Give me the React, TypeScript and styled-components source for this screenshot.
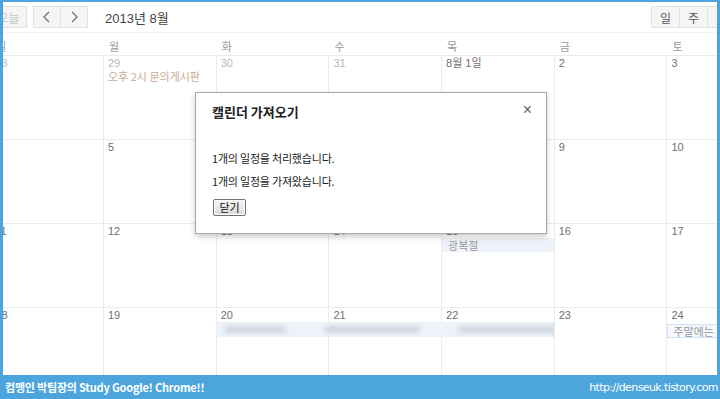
import styled, { createGlobalStyle } from "styled-components";

const GlobalStyle = createGlobalStyle`
  html, body {
    margin: 0;
    padding: 0;
    background: #ffffff;
  }
  body {
    font-family: "Liberation Sans", Arial, "Noto Sans CJK KR", sans-serif;
  }
`;

const Frame = styled.div`
  width: 720px;
  height: 399px;
  background: #4ca6dd;
  padding: 2px 3px 0 3px;
  box-sizing: border-box;
  display: flex;
  flex-direction: column;
  overflow: hidden;
`;

const Screen = styled.div`
  position: relative;
  flex: 1;
  background: #ffffff;
  overflow: hidden;
`;

const Toolbar = styled.div`
  height: 31px;
  display: flex;
  align-items: center;
  border-bottom: 1px solid #f3f3f3;
  box-sizing: border-box;
`;

const ButtonGroup = styled.div<{ $offset?: number; $overflow?: number }>`
  display: flex;
  margin-left: ${(p) => p.$offset ?? 0}px;
  margin-right: ${(p) => -(p.$overflow ?? 0)}px;
  height: 22px;
  flex-shrink: 0;
`;

const ToolButton = styled.div<{ $width: number; $muted?: boolean }>`
  width: ${(p) => p.$width}px;
  height: 22px;
  box-sizing: border-box;
  background: #f5f5f5;
  border: 1px solid #e2e2e2;
  margin-left: -1px;
  display: flex;
  align-items: center;
  justify-content: center;
  font-family: "Noto Sans CJK KR", sans-serif;
  font-size: 12px;
  color: ${(p) => (p.$muted ? "#c4c4c4" : "#555")};
  flex-shrink: 0;
`;

const MonthTitle = styled.div`
  margin-left: 17px;
  font-family: "Liberation Sans", "Noto Sans CJK KR", sans-serif;
  font-size: 13px;
  color: #444;
  flex: 1;
  padding-top: 1px;
`;

const Calendar = styled.div`
  margin-left: -12.7px;
  width: 789px;
`;

const HeadRow = styled.div`
  display: grid;
  grid-template-columns: repeat(7, 112.7px);
  height: 23px;
  border-bottom: 1px solid #ebebeb;
  box-sizing: border-box;
`;

const DayName = styled.div`
  padding: 5px 0 0 6px;
  font-family: "Noto Sans CJK KR", sans-serif;
  font-size: 11px;
  color: #999;
`;

const WeekRow = styled.div`
  display: grid;
  grid-template-columns: repeat(7, 112.7px);
  grid-template-rows: 1fr;
  height: 84px;
  border-bottom: 1px solid #ebebeb;
  box-sizing: border-box;
`;

const Cell = styled.div<{ $col: number }>`
  grid-column: ${(p) => p.$col};
  grid-row: 1;
  border-left: 1px solid #ebebeb;
  padding: 1px 0 0 4px;
  box-sizing: border-box;
  min-width: 0;
  overflow: hidden;
`;

const DateNum = styled.div<{ $faded?: boolean }>`
  font-family: "Liberation Sans", "Noto Sans CJK KR", sans-serif;
  font-size: 11px;
  line-height: 13px;
  color: ${(p) => (p.$faded ? "#b8b8b8" : "#707070")};
`;

const EventText = styled.div`
  margin-top: 0;
  font-family: "Noto Sans CJK KR", sans-serif;
  font-size: 11px;
  line-height: 13px;
  color: #c9a992;
  white-space: nowrap;
`;

const EventBar = styled.div<{ $boxed?: boolean }>`
  margin: ${(p) => (p.$boxed ? 2 : 0)}px 0 0 -4px;
  height: 14px;
  background: ${(p) => (p.$boxed ? "#f5f9fd" : "#edf3f9")};
  border: 1px solid ${(p) => (p.$boxed ? "#cfe1f2" : "transparent")};
  box-sizing: border-box;
  padding-left: 5px;
  font-family: "Noto Sans CJK KR", sans-serif;
  font-size: 11px;
  line-height: 12px;
  color: #9a9a9a;
  white-space: nowrap;
  overflow: hidden;
`;

const SpanBar = styled.div`
  grid-column: 3 / 6;
  grid-row: 1;
  align-self: start;
  margin-top: 14px;
  height: 15px;
  background: #edf3f9;
  border-right: 1px solid #cfe1f2;
  display: flex;
  align-items: center;
  gap: 38px;
  padding-left: 8px;
  box-sizing: border-box;
  overflow: hidden;
`;

const Blurred = styled.span<{ $w: number }>`
  display: inline-block;
  width: ${(p) => p.$w}px;
  height: 7px;
  background: #cfd6de;
  border-radius: 4px;
  filter: blur(2.5px);
  flex-shrink: 0;
`;

const Dialog = styled.div`
  position: absolute;
  left: 192px;
  top: 90px;
  width: 352px;
  height: 142px;
  background: #ffffff;
  border: 1px solid #a8a8a8;
  box-shadow: 0 3px 6px rgba(0, 0, 0, 0.2);
  box-sizing: border-box;
  padding: 7px 16px 0 16px;
  display: flex;
  flex-direction: column;
  font-family: "Noto Sans CJK KR", sans-serif;
`;

const DialogHead = styled.div`
  display: flex;
  justify-content: space-between;
  align-items: center;
  height: 22px;
`;

const DialogTitle = styled.div`
  font-size: 13px;
  font-weight: 700;
  color: #222;
`;

const CloseMark = styled.div`
  font-family: "Liberation Sans", sans-serif;
  font-size: 16px;
  color: #666;
  margin-right: -2px;
  margin-top: -3px;
`;

const Message = styled.div<{ $gap: number }>`
  margin-top: ${(p) => p.$gap}px;
  font-size: 11px;
  line-height: 14px;
  color: #222;
  letter-spacing: -0.2px;
`;

const CloseButton = styled.button`
  align-self: flex-start;
  margin-top: 11px;
  margin-left: 1px;
  width: 33px;
  height: 17px;
  padding: 0;
  font-family: "Noto Sans CJK KR", sans-serif;
  font-size: 11px;
  line-height: 13px;
  color: #111;
  background: linear-gradient(#f4f4f4, #dcdcdc);
  border: 1px solid #707070;
  border-radius: 2px;
  box-shadow: inset 0 0 0 1px #fff;
`;

const Footer = styled.div`
  height: 24px;
  flex-shrink: 0;
  display: flex;
  align-items: center;
  justify-content: space-between;
  padding: 0 0 0 2px;
  color: #ffffff;
`;

const FooterLeft = styled.div`
  font-family: "Noto Sans CJK KR", sans-serif;
  font-size: 11px;
  font-weight: 700;
  letter-spacing: -0.2px;
`;

const FooterRight = styled.div`
  font-family: "DejaVu Sans", sans-serif;
  font-size: 11px;
  letter-spacing: -0.6px;
  margin-right: -1px;
`;

const Chevron = ({ dir }: { dir: "left" | "right" }) => (
  <svg width="10" height="12" viewBox="0 0 10 12">
    <path
      d={dir === "left" ? "M7 1 L2 6 L7 11" : "M3 1 L8 6 L3 11"}
      fill="none"
      stroke="#777"
      strokeWidth="1.4"
    />
  </svg>
);

const dayNames = ["일", "월", "화", "수", "목", "금", "토"];

const weeks = [
  ["28", "29", "30", "31", "8월 1일", "2", "3"],
  ["4", "5", "6", "7", "8", "9", "10"],
  ["11", "12", "13", "14", "15", "16", "17"],
  ["18", "19", "20", "21", "22", "23", "24"],
];

export default function App() {
  return (
    <>
      <GlobalStyle />
      <Frame>
        <Screen>
          <Toolbar>
            <ButtonGroup $offset={-12}>
              <ToolButton $width={37} $muted>
                오늘
              </ToolButton>
            </ButtonGroup>
            <ButtonGroup $offset={7}>
              <ToolButton $width={28}>
                <Chevron dir="left" />
              </ToolButton>
              <ToolButton $width={28}>
                <Chevron dir="right" />
              </ToolButton>
            </ButtonGroup>
            <MonthTitle>2013년 8월</MonthTitle>
            <ButtonGroup $overflow={30}>
              <ToolButton $width={29}>일</ToolButton>
              <ToolButton $width={29}>주</ToolButton>
              <ToolButton $width={40} />
            </ButtonGroup>
          </Toolbar>
          <Calendar>
            <HeadRow>
              {dayNames.map((d) => (
                <DayName key={d}>{d}</DayName>
              ))}
            </HeadRow>
            {weeks.map((week, wi) => (
              <WeekRow key={wi}>
                {week.map((day, di) => (
                  <Cell key={day} $col={di + 1}>
                    <DateNum $faded={wi === 0 && di < 4}>{day}</DateNum>
                    {wi === 0 && di === 1 ? (
                      <EventText>오후 2시 문의게시판</EventText>
                    ) : null}
                    {wi === 2 && di === 4 ? <EventBar>광복절</EventBar> : null}
                    {wi === 3 && di === 6 ? (
                      <EventBar $boxed>주말에는 대</EventBar>
                    ) : null}
                  </Cell>
                ))}
                {wi === 3 ? (
                  <SpanBar>
                    <Blurred $w={62} />
                    <Blurred $w={96} />
                    <Blurred $w={100} />
                  </SpanBar>
                ) : null}
              </WeekRow>
            ))}
          </Calendar>
          <Dialog>
            <DialogHead>
              <DialogTitle>캘린더 가져오기</DialogTitle>
              <CloseMark>×</CloseMark>
            </DialogHead>
            <Message $gap={29}>1개의 일정을 처리했습니다.</Message>
            <Message $gap={9}>1개의 일정을 가져왔습니다.</Message>
            <CloseButton>닫기</CloseButton>
          </Dialog>
        </Screen>
        <Footer>
          <FooterLeft>컴맹인 박팀장의 Study Google! Chrome!!</FooterLeft>
          <FooterRight>http://denseuk.tistory.com</FooterRight>
        </Footer>
      </Frame>
    </>
  );
}
